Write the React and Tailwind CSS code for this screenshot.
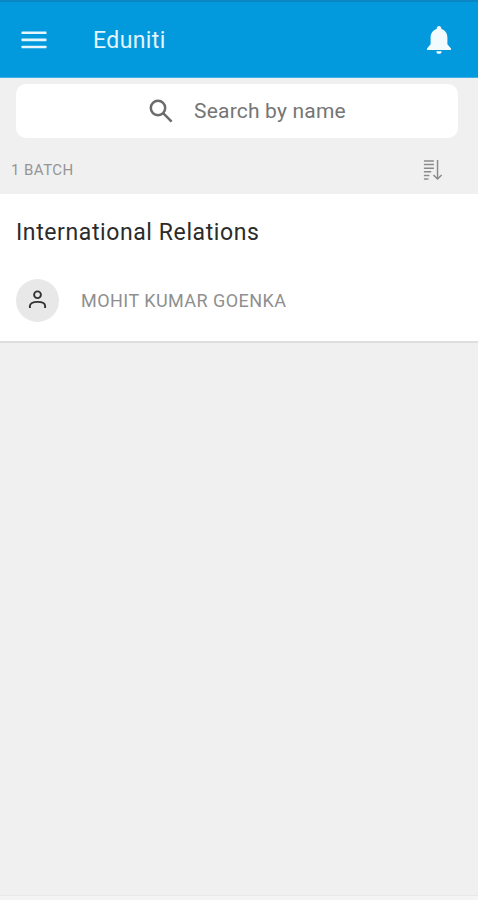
const App = () => {
  return (
    <div className="h-[900px] w-[478px] flex flex-col bg-[#f0f0f0] font-['Roboto',sans-serif] overflow-hidden">
      <header className="h-[78px] shrink-0 flex items-center bg-[#0299dd] border-t-2 border-[#0b86c4] border-b border-b-[#3fb0e6] pl-[21px] pr-[26px]">
        <svg width="26" height="20" viewBox="0 0 26 20" fill="#e6f6fd" className="shrink-0">
          <rect x="0.5" y="1.5" width="25" height="2.6" rx="0.6" />
          <rect x="0.5" y="8.6" width="25" height="2.6" rx="0.6" />
          <rect x="0.5" y="15.7" width="25" height="2.6" rx="0.6" />
        </svg>
        <h1 className="ml-[46px] mt-[2px] text-[23px] tracking-[0.4px] text-[#e3f5fd] leading-none">Eduniti</h1>
        <svg width="26" height="30" viewBox="0 0 26 30" fill="#f4fbfe" className="ml-auto shrink-0 mt-[1px]">
          <path d="M13 1c-1.4 0-2.3 1-2.3 2.3v.6C6.6 5 4.6 8.5 4.6 12.6v6.6L1 23.4v1.5h24v-1.5l-3.6-4.2v-6.6c0-4.1-2-7.6-6.1-8.7v-.6C15.3 2 14.4 1 13 1z" />
          <path d="M10.4 26.2a2.6 2.6 0 0 0 5.2 0z" />
        </svg>
      </header>

      <div className="ml-[16px] mr-[20px] mt-[6px] h-[54px] shrink-0 bg-white rounded-[10px] flex items-center pl-[132px]">
        <svg width="26" height="26" viewBox="0 0 26 26" fill="none" stroke="#6b6b6b" strokeWidth="2.5" className="shrink-0">
          <circle cx="10" cy="10" r="7.2" />
          <path d="M15.4 15.4 L23.6 23.6" />
        </svg>
        <span className="ml-[20px] mt-[1px] text-[21px] tracking-[0.2px] text-[#757575] leading-none">Search by name</span>
      </div>

      <div className="h-[56px] shrink-0 flex items-center justify-between pt-[8px] pl-[11px] pr-[35px]">
        <span className="text-[15px] tracking-[0.45px] text-[#959595] leading-none">1 BATCH</span>
        <svg width="20" height="22" viewBox="0 0 22 24" fill="none" stroke="#8a8a8a" strokeWidth="1.6" className="shrink-0">
          <path d="M1 2h11M1 6h11M1 10h11M1 14h8M1 18h6M1 22h5" />
          <path d="M16 1v21M11.5 17.5 16 22l4.5-4.5" />
        </svg>
      </div>

      <section className="shrink-0 h-[149px] bg-white border-b-2 border-[#dedede] pl-[16px]">
        <h2 className="mt-[25px] text-[23px] tracking-[0.6px] text-[#2b2b2b] leading-[28px]">International Relations</h2>
        <div className="mt-[32px] flex items-center">
          <div className="w-[43px] h-[43px] rounded-full bg-[#e8e8e8] flex items-center justify-center">
            <svg width="19" height="21" viewBox="0 0 20 22" fill="none" stroke="#333333" strokeWidth="2" className="mt-[-2px]">
              <circle cx="10" cy="6" r="3.6" />
              <path d="M2 20v-2.2c0-2.6 3-4.3 8-4.3s8 1.7 8 4.3V20" />
            </svg>
          </div>
          <span className="ml-[22px] text-[18px] tracking-[0.45px] text-[#8f8f8f] leading-none">MOHIT KUMAR GOENKA</span>
        </div>
      </section>

      <div className="flex-1" />
      <div className="h-[5px] shrink-0 bg-[#f4f4f4] border-t border-[#e8e8e8]" />
    </div>
  );
};

export default App;
